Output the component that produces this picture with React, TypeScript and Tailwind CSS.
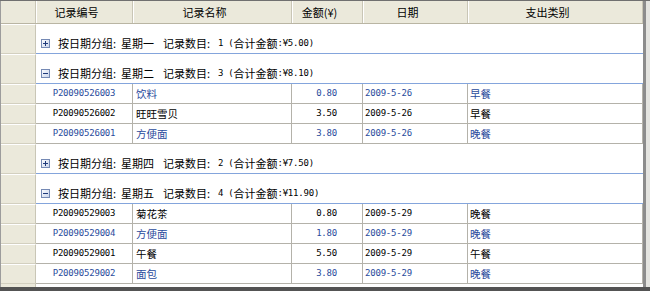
import React from "react";

type Row = [string, string, string, string, string];

type Group = {
  day: string;
  count: number;
  total: string;
  open: boolean;
  rows: Row[];
};

const groups: Group[] = [
  { day: "星期一", count: 1, total: "5.00", open: false, rows: [] },
  {
    day: "星期二",
    count: 3,
    total: "8.10",
    open: true,
    rows: [
      ["P20090526003", "饮料", "0.80", "2009-5-26", "早餐"],
      ["P20090526002", "旺旺雪贝", "3.50", "2009-5-26", "早餐"],
      ["P20090526001", "方便面", "3.80", "2009-5-26", "晚餐"],
    ],
  },
  { day: "星期四", count: 2, total: "7.50", open: false, rows: [] },
  {
    day: "星期五",
    count: 4,
    total: "11.90",
    open: true,
    rows: [
      ["P20090529003", "菊花茶", "0.80", "2009-5-29", "晚餐"],
      ["P20090529004", "方便面", "1.80", "2009-5-29", "晚餐"],
      ["P20090529001", "午餐", "5.50", "2009-5-29", "午餐"],
      ["P20090529002", "面包", "3.80", "2009-5-29", "晚餐"],
    ],
  },
];

const cjk = "font-['Noto_Sans_CJK_SC',sans-serif]";
const mono = "font-['DejaVu_Sans_Mono',monospace] text-[9px] tracking-[-0.2px]";

const ToggleBox = ({ open }: { open: boolean }) => (
  <svg width="9" height="9" viewBox="0 0 9 9" className="shrink-0">
    <defs>
      <linearGradient id="tg" x1="0" y1="0" x2="1" y2="1">
        <stop offset="0" stopColor="#ffffff" />
        <stop offset="1" stopColor="#c6d2ea" />
      </linearGradient>
    </defs>
    <rect x="0.5" y="0.5" width="8" height="8" fill="url(#tg)" stroke="#7489b4" />
    <line x1="2" y1="4.5" x2="7" y2="4.5" stroke="#1f3a7a" />
    {!open && <line x1="4.5" y1="2" x2="4.5" y2="7" stroke="#1f3a7a" />}
  </svg>
);

const RowHead = ({ h }: { h: string }) => (
  <div className={`w-[35px] shrink-0 ${h} bg-[#ebe9db] border-t border-t-white border-b border-b-[#d3d0c0] border-r border-r-[#c9c6b6]`} />
);

const headers = [
  { label: "记录编号", w: "w-[97px]" },
  { label: "记录名称", w: "w-[159px]" },
  { label: "金额(¥)", w: "w-[71px]" },
  { label: "日期", w: "w-[105px]" },
  { label: "支出类别", w: "w-[175px]" },
];

const GroupRow = ({ g }: { g: Group }) => (
  <div className="flex h-[30px]">
    <RowHead h="h-[30px]" />
    <div className="flex-1 bg-white border-b border-[#84a5dc] flex items-start pt-[15px] pl-[5px] leading-[12px] text-black">
      <ToggleBox open={g.open} />
      <div className="flex items-center ml-[8px] -mt-[2px] whitespace-pre">
        <span className={`${cjk} text-[11px]`}>按日期分组</span>
        <span className={`${cjk} text-[11px] w-[8px]`}>:</span>
        <span className={`${cjk} text-[11px]`}>{g.day}</span>
        <span className="w-[9px]" />
        <span className={`${cjk} text-[11px]`}>记录数目</span>
        <span className={`${cjk} text-[11px] w-[11px]`}>:</span>
        <span className={mono}>{g.count}</span>
        <span className="w-[5px]" />
        <span className={mono}>(</span>
        <span className={`${cjk} text-[11px]`}>合计金额</span>
        <span className={mono}>{`:¥${g.total})`}</span>
      </div>
    </div>
  </div>
);

const DataRow = ({ r, blue }: { r: Row; blue: boolean }) => {
  const color = blue ? "text-[#2a4b9c]" : "text-black";
  const cell = "h-[20px] border-r border-b border-[#b4b2aa] flex items-center";
  return (
    <div className={`flex h-[20px] ${color}`}>
      <RowHead h="h-[20px]" />
      <div className={`${cell} w-[97px] justify-center`}>
        <span className={mono}>{r[0]}</span>
      </div>
      <div className={`${cell} w-[159px] pl-[3px]`}>
        <span className={`${cjk} text-[10.5px]`}>{r[1]}</span>
      </div>
      <div className={`${cell} w-[71px] justify-end pr-[25px]`}>
        <span className={mono}>{r[2]}</span>
      </div>
      <div className={`${cell} w-[105px] pl-[2px]`}>
        <span className={mono}>{r[3]}</span>
      </div>
      <div className={`${cell} w-[175px] pl-[2px]`}>
        <span className={`${cjk} text-[10.5px]`}>{r[4]}</span>
      </div>
    </div>
  );
};

export default function App() {
  let idx = 0;
  return (
    <div className="w-[650px] h-[291px] flex flex-col border-t border-[#707070] bg-[#d4d0c8] overflow-hidden">
      <div className="flex flex-1 min-h-0">
        <div className="w-[643px] flex flex-col bg-white border-l border-[#9c9c9c]">
          {/* header */}
          <div className="flex h-[23px] bg-[#ebe9db] border-b border-[#b9b5a3]">
            <div className="w-[35px] shrink-0 border-r border-[#c9c6b6]" />
            {headers.map((h) => (
              <div
                key={h.label}
                className={`${h.w} border-l border-l-white border-r border-r-[#c9c6b6] flex items-center justify-center pr-[16px] text-black ${cjk} text-[11px]`}
              >
                {h.label}
              </div>
            ))}
          </div>
          {groups.map((g) => (
            <React.Fragment key={g.day}>
              <GroupRow g={g} />
              {g.rows.map((r) => {
                const blue = idx % 2 === 0;
                idx++;
                return <DataRow key={r[0]} r={r} blue={blue} />;
              })}
            </React.Fragment>
          ))}
          <div className="flex flex-1">
            <div className="w-[35px] bg-[#ebe9db] border-r border-[#c9c6b6]" />
            <div className="flex-1 bg-white" />
          </div>
        </div>
        <div className="w-[3px] bg-[#8c8c8c]" />
        <div className="flex-1 bg-[#e4e4e0]" />
      </div>
      <div className="h-[4px] bg-[#535353]" />
    </div>
  );
}
